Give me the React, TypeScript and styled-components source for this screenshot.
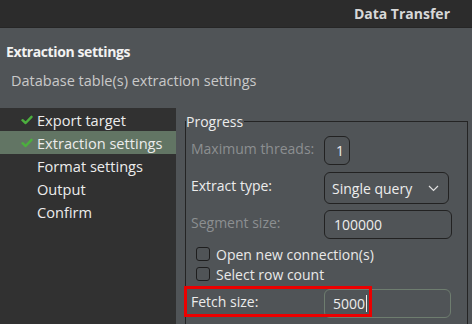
import React from "react";
import styled, { createGlobalStyle } from "styled-components";

const Global = createGlobalStyle`
  html, body { margin: 0; padding: 0; background: #505457; }
  * { box-sizing: border-box; }
`;

const FONT = `"Open Sans", "DejaVu Sans", sans-serif`;

const Window = styled.div`
  width: 472px;
  height: 324px;
  overflow: hidden;
  display: flex;
  flex-direction: column;
  background: #505457;
  font-family: ${FONT};
  font-size: 14px;
  color: #e9e9e9;
`;

const TitleBar = styled.div`
  height: 28px;
  flex: none;
  background: #2c2c2c;
  display: flex;
  align-items: center;
  justify-content: flex-end;
  padding-right: 22px;
  font-weight: 700;
  color: #d8d8d8;
  border-bottom: 1px solid #262626;
`;

const Header = styled.div`
  height: 80px;
  flex: none;
  display: flex;
  flex-direction: column;
  padding: 14px 0 0 6px;
`;

const PageTitle = styled.div`
  font-weight: 700;
  color: #f2f2f2;
  line-height: 20px;
  letter-spacing: -0.4px;
`;

const PageSub = styled.div`
  margin-top: 9px;
  padding-left: 5px;
  color: #c9c9c9;
  line-height: 20px;
  font-size: 14.5px;
`;

const Body = styled.div`
  flex: 1;
  display: flex;
  min-height: 0;
`;

const Nav = styled.div`
  width: 176px;
  flex: none;
  background: #313131;
  display: flex;
  flex-direction: column;
`;

const NavItem = styled.div<{ $selected?: boolean }>`
  height: 23px;
  display: flex;
  align-items: center;
  padding-left: 21px;
  background: ${(p) => (p.$selected ? "#627564" : "transparent")};
  color: #ececec;
  white-space: nowrap;
  font-size: 14.6px;
`;

const CheckSlot = styled.span`
  width: 16px;
  flex: none;
  display: flex;
  align-items: center;
`;

const Content = styled.div`
  flex: 1;
  padding: 5px 4px 0 9px;
  display: flex;
`;

const Group = styled.fieldset`
  flex: 1;
  margin: 0;
  padding: 6px 0 0 5px;
  border: 1px solid #242424;
  min-height: 260px;
  min-width: 0;
  display: flex;
  flex-direction: column;
`;

const Legend = styled.legend`
  padding: 0 1px 0 0;
  margin-left: -5px;
  color: #ececec;
  line-height: 17px;
`;

const Row = styled.div<{ $mt?: number; $h: number }>`
  display: flex;
  align-items: stretch;
  height: ${(p) => p.$h}px;
  margin-top: ${(p) => p.$mt ?? 0}px;
  flex: none;
`;

const Label = styled.div<{ $disabled?: boolean }>`
  width: 133px;
  flex: none;
  position: relative;
  display: flex;
  align-items: center;
  padding-bottom: 5px;
  color: ${(p) => (p.$disabled ? "#8c8f91" : "#ececec")};
  white-space: nowrap;
`;

const Field = styled.div<{ $w: number; $focus?: boolean; $pad?: number }>`
  width: ${(p) => p.$w}px;
  border: ${(p) => (p.$focus ? "1.5px solid #6e7d6f" : "1px solid #222")};
  border-radius: 6px;
  display: flex;
  align-items: center;
  padding-left: ${(p) => p.$pad ?? 9}px;
  color: #ededed;
`;

const Combo = styled(Field)`
  justify-content: space-between;
  padding-right: 9px;
`;

const Caret = styled.span`
  display: inline-block;
  width: 1px;
  height: 17px;
  background: #f0f0f0;
  margin-left: 1px;
`;

const CheckRow = styled.div<{ $mt: number }>`
  display: flex;
  align-items: center;
  gap: 6px;
  padding-left: 5px;
  height: 14px;
  margin-top: ${(p) => p.$mt}px;
  white-space: nowrap;
  flex: none;
`;

const Box = styled.span`
  width: 14px;
  height: 14px;
  border: 1px solid #1e1e1e;
  border-radius: 3px;
  flex: none;
`;

const Highlight = styled.div`
  position: absolute;
  left: -7px;
  top: -3px;
  width: 188px;
  height: 31px;
  border: 3px solid #ec0000;
  pointer-events: none;
  z-index: 2;
`;

const Check = () => (
  <svg width="12" height="10" viewBox="0 0 12 10">
    <path d="M1.5 5.2 L4.6 8 L10.5 1.8" stroke="#4caf3e" strokeWidth="2.4" fill="none" strokeLinecap="round" strokeLinejoin="round" />
  </svg>
);

const Chevron = () => (
  <svg width="11" height="7" viewBox="0 0 11 7">
    <path d="M1 1 L5.5 5.5 L10 1" stroke="#e0e0e0" strokeWidth="1.2" fill="none" />
  </svg>
);

export default function App() {
  const nav = [
    { t: "Export target", c: true },
    { t: "Extraction settings", c: true, s: true },
    { t: "Format settings" },
    { t: "Output" },
    { t: "Confirm" },
  ];
  return (
    <>
      <Global />
      <Window>
        <TitleBar>Data Transfer</TitleBar>
        <Header>
          <PageTitle>Extraction settings</PageTitle>
          <PageSub>Database table(s) extraction settings</PageSub>
        </Header>
        <Body>
          <Nav>
            {nav.map((n) => (
              <NavItem key={n.t} $selected={n.s}>
                <CheckSlot>{n.c && <Check />}</CheckSlot>
                {n.t}
              </NavItem>
            ))}
          </Nav>
          <Content>
            <Group>
              <Legend>Progress</Legend>
              <Row $h={29}>
                <Label $disabled>Maximum threads:</Label>
                <Field $w={26} $pad={11}>1</Field>
              </Row>
              <Row $h={32} $mt={7}>
                <Label>Extract type:</Label>
                <Combo $w={125} $pad={7}>
                  <span>Single query</span>
                  <Chevron />
                </Combo>
              </Row>
              <Row $h={29} $mt={6}>
                <Label $disabled>Segment size:</Label>
                <Field $w={128} $pad={9}>100000</Field>
              </Row>
              <CheckRow $mt={8}>
                <Box />
                Open new connection(s)
              </CheckRow>
              <CheckRow $mt={6}>
                <Box />
                Select row count
              </CheckRow>
              <Row $h={29} $mt={8}>
                <Label>
                  Fetch size:
                  <Highlight />
                </Label>
                <Field $w={127} $focus $pad={8}>
                  5000
                  <Caret />
                </Field>
              </Row>
            </Group>
          </Content>
        </Body>
      </Window>
    </>
  );
}
